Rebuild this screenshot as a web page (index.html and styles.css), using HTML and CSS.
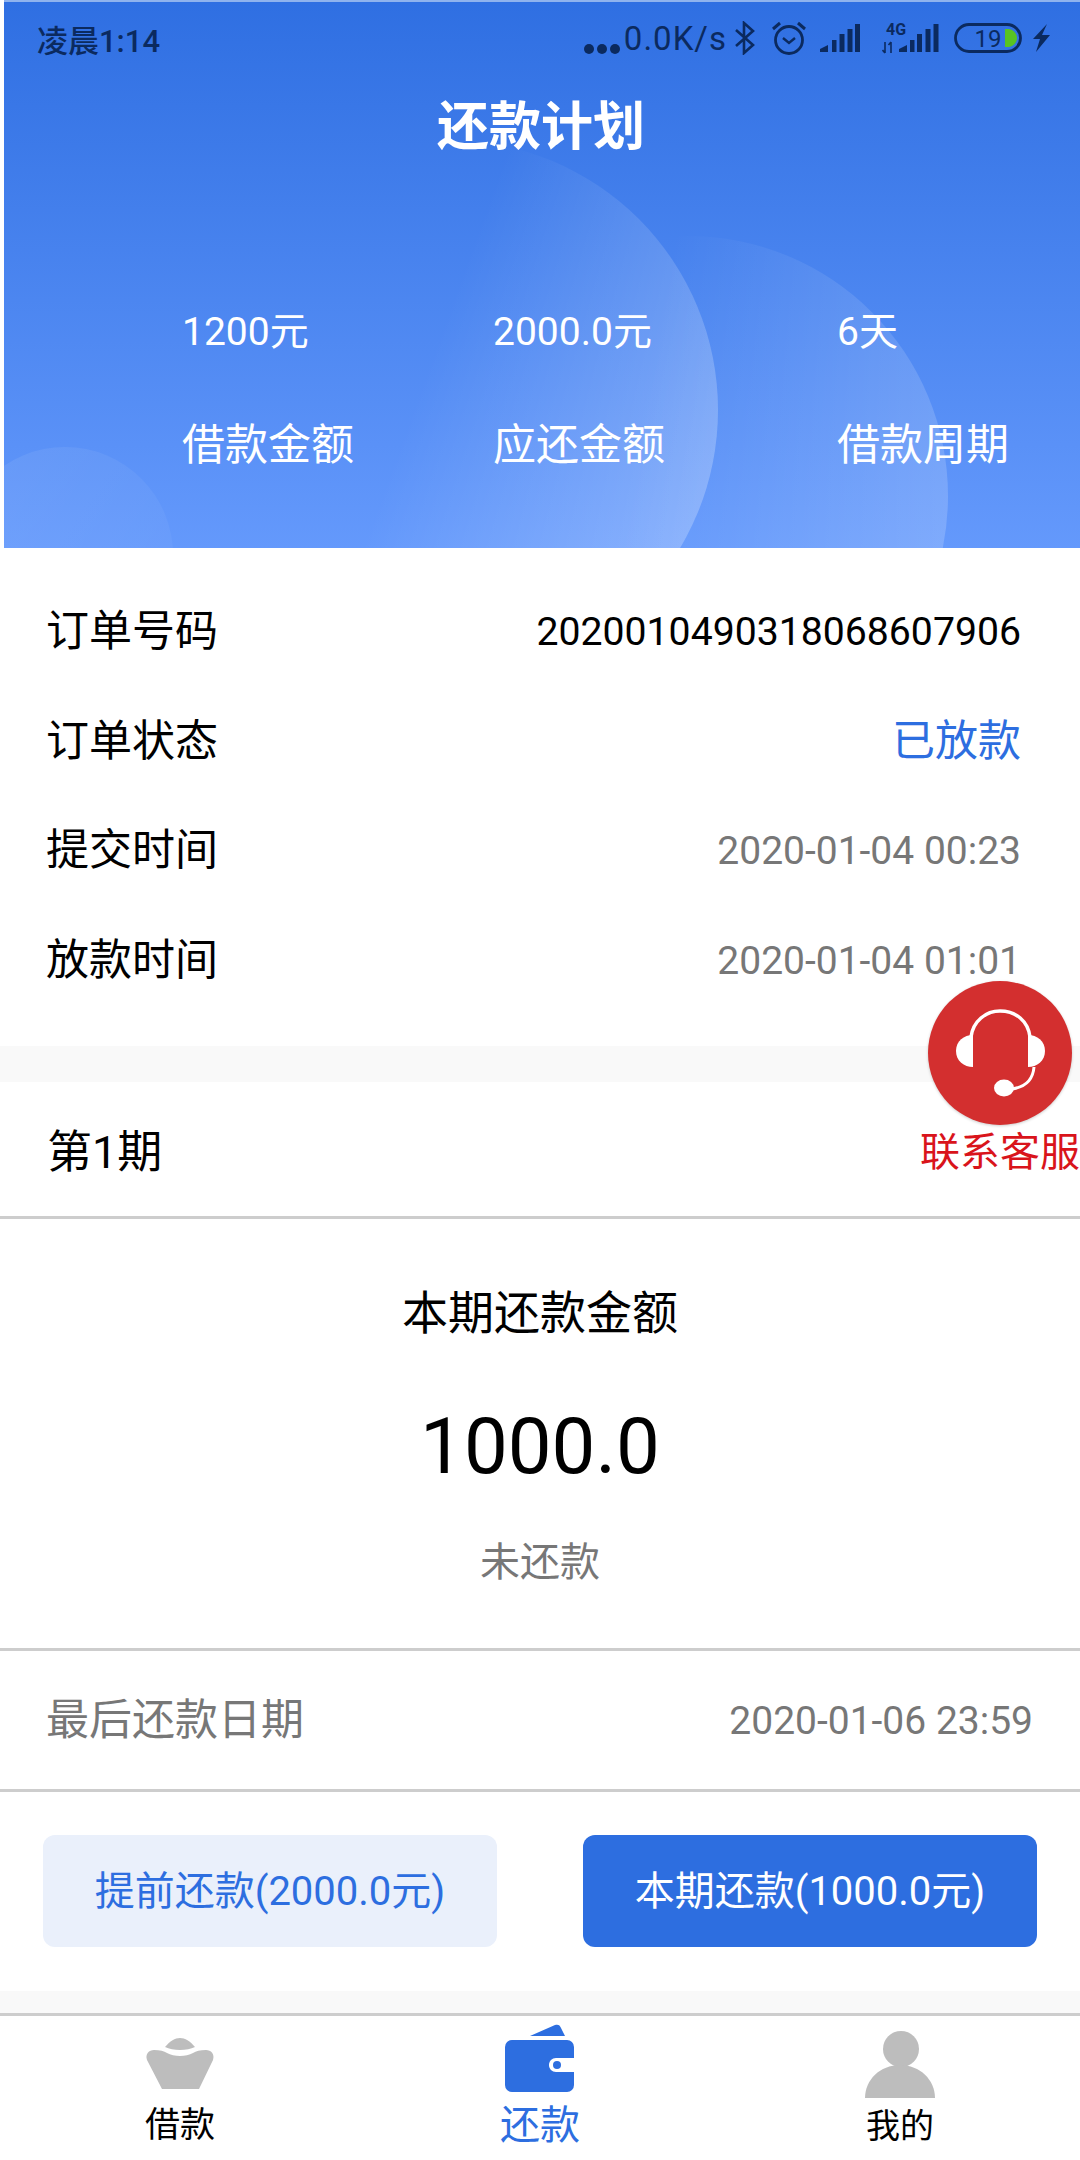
FILE: index.html
```html
<!DOCTYPE html>
<html>
<head>
    <title>还款计划</title>
    <link rel="stylesheet" href="styles.css">
</head>
<body>
    <div class="page">
        <div class="hero">
            <div class="bubble bubble-big"></div>
            <div class="bubble bubble-mid"></div>
            <div class="bubble bubble-small"></div>

            <div class="status-bar">
                <span class="status-time">凌晨1:14</span>
                <div class="status-icons">
                    <span class="status-dots"><i></i><i></i><i></i></span>
                    <span class="status-speed">0.0K/s</span>
                    <svg class="icon-bt" width="20" height="34" viewBox="0 0 20 34"><path d="M1 9 L18 24 L9 32 V2 L18 10 L1 25" fill="none" stroke="#0b2a5f" stroke-width="2.6"/></svg>
                    <svg class="icon-alarm" width="34" height="34" viewBox="0 0 34 34"><circle cx="17" cy="19" r="13.5" fill="none" stroke="#0b2a5f" stroke-width="2.8"/><path d="M11 17 L17 22 L23 17" fill="none" stroke="#0b2a5f" stroke-width="2.4"/><path d="M1 8 L8 2 M33 8 L26 2" stroke="#0b2a5f" stroke-width="3"/></svg>
                    <svg class="icon-signal" width="40" height="30" viewBox="0 0 40 30"><path d="M0 29 V26 L8 22 V29 Z" fill="#0b2a5f"/><rect x="12" y="17" width="4.5" height="12" fill="#0b2a5f"/><rect x="19.5" y="11" width="5" height="18" fill="#0b2a5f"/><rect x="27.5" y="6" width="5" height="23" fill="#0b2a5f"/><rect x="35" y="1" width="5" height="28" fill="#0b2a5f"/></svg>
                    <svg class="icon-signal-4g" width="57" height="34" viewBox="0 0 57 34"><text class="net-label" x="4" y="14">4G</text><path d="M3 21 V32 M0.5 29 L3 32 M9 32 V21 M6.5 24 L9 21" fill="none" stroke="#0b2a5f" stroke-width="1.6"/><path d="M17 31 V28 L25 24 V31 Z" fill="#0b2a5f"/><rect x="28" y="19" width="4.5" height="12" fill="#0b2a5f"/><rect x="35" y="13" width="5" height="18" fill="#0b2a5f"/><rect x="43.5" y="8" width="5" height="23" fill="#0b2a5f"/><rect x="51.5" y="3" width="5" height="28" fill="#0b2a5f"/></svg>
                    <svg class="icon-battery" width="68" height="30" viewBox="0 0 68 30"><rect x="1.5" y="1.5" width="65" height="27" rx="13.5" fill="none" stroke="#0b2a5f" stroke-width="2.8"/><path d="M51 6 H55 C60 7 63 11 63 15 C63 19 60 23 55 24 H51 Z" fill="#58c322"/><text class="battery-label" x="34" y="23.5" text-anchor="middle">19</text></svg>
                    <svg class="icon-bolt" width="17" height="28" viewBox="0 0 17 28"><path d="M14 0 L0 15 H7 L3 28 L17 11 H9 Z" fill="#0b2a5f"/></svg>
                </div>
            </div>

            <div class="hero-title">还款计划</div>

            <div class="stats">
                <div class="stat">
                    <div class="stat-value">1200元</div>
                    <div class="stat-label">借款金额</div>
                </div>
                <div class="stat">
                    <div class="stat-value">2000.0元</div>
                    <div class="stat-label">应还金额</div>
                </div>
                <div class="stat">
                    <div class="stat-value">6天</div>
                    <div class="stat-label">借款周期</div>
                </div>
            </div>
        </div>

        <div class="order">
            <div class="order-row">
                <span class="order-label">订单号码</span>
                <span class="order-number">2020010490318068607906</span>
            </div>
            <div class="order-row">
                <span class="order-label">订单状态</span>
                <span class="order-status">已放款</span>
            </div>
            <div class="order-row">
                <span class="order-label">提交时间</span>
                <span class="order-date">2020-01-04 00:23</span>
            </div>
            <div class="order-row">
                <span class="order-label">放款时间</span>
                <span class="order-date">2020-01-04 01:01</span>
            </div>
        </div>

        <div class="band band-top"></div>

        <div class="period-title">第1期</div>

        <div class="amount">
            <div class="amount-label">本期还款金额</div>
            <div class="amount-value">1000.0</div>
            <div class="amount-state">未还款</div>
        </div>

        <div class="due-row">
            <span class="due-label">最后还款日期</span>
            <span class="due-date">2020-01-06 23:59</span>
        </div>

        <div class="actions">
            <div class="btn btn-light">提前还款(2000.0元)</div>
            <div class="btn btn-primary">本期还款(1000.0元)</div>
        </div>

        <div class="band band-bottom"></div>

        <div class="tabbar">
            <div class="tab">
                <svg class="tab-icon" width="80" height="76" viewBox="0 0 80 76"><path d="M25 25 C30 19 35 16 40 16 C45 16 50 19 55 25 C47 29 33 29 25 25 Z" fill="#bdbdbd"/><path d="M14 28 C20 28 24 29 27 31 C34 35 46 35 53 31 C56 29 60 28 66 28 C71 28 75 32 73 38 L59 67 L22 67 L7 38 C5 32 9 28 14 28 Z" fill="#bdbdbd"/></svg>
                <span class="tab-label">借款</span>
            </div>
            <div class="tab tab-active">
                <svg class="tab-icon" width="80" height="76" viewBox="0 0 80 76"><path d="M30 14 L55 3 C58 2 60 3 61 6 L65 14 Z" fill="#2d6ee0"/><rect x="5" y="18" width="69" height="52" rx="7" fill="#2d6ee0"/><path d="M74 36 H56 C52 36 49 39 49 43 C49 47 52 50 56 50 H74 Z" fill="#fff"/><circle cx="57" cy="43" r="4" fill="#2d6ee0"/></svg>
                <span class="tab-label">还款</span>
            </div>
            <div class="tab tab-me">
                <svg class="tab-icon" width="80" height="76" viewBox="0 0 80 76"><circle cx="41" cy="27" r="18" fill="#bdbdbd"/><path d="M5 76 C5 58 20 43 40 43 C60 43 75 58 75 76 Z" fill="#bdbdbd"/></svg>
                <span class="tab-label">我的</span>
            </div>
        </div>

        <div class="service">
            <div class="service-circle">
                <svg width="144" height="144" viewBox="0 0 144 144"><path d="M43 56 C45 40 58 30 72 30 C88 30 100 40 102 56" fill="none" stroke="#fff" stroke-width="3.5"/><path d="M45 54 V86 C36 86 28 80 28 70 C28 60 36 54 45 54 Z" fill="#fff"/><path d="M100 54 V86 C109 86 117 80 117 70 C117 60 109 54 100 54 Z" fill="#fff"/><path d="M106 86 C105 98 98 106 84 108" fill="none" stroke="#fff" stroke-width="3"/><ellipse cx="76" cy="107" rx="10" ry="8.5" fill="#fff"/></svg>
            </div>
            <div class="service-label">联系客服</div>
        </div>
    </div>
</body>
</html>
```

FILE: styles.css
```css
:root {
    --blue: #2d6ee0;
    --status-color: #0b2a5f;
    --grey-text: #777;
    --line-color: #cdcdcd;
    --band-color: #f9f9f9;
}

body {
    margin: 0;
    padding: 0;
    background: #fff;
    color: #000;
    font-family: Roboto, "Noto Sans CJK SC", sans-serif;
}

.page {
    position: relative;
    width: 1080px;
    height: 2160px;
    overflow: hidden;
}

/* Header */
.hero {
    position: relative;
    height: 546px;
    margin-left: 4px;
    border-top: 2px solid #8fb3ee;
    overflow: hidden;
    color: #fff;
    background: linear-gradient(180deg, #2f6fe2 0%, #6499fc 100%);
}

.bubble {
    position: absolute;
    border-radius: 50%;
}

.bubble-big {
    left: 174px;
    top: 138px;
    width: 540px;
    height: 540px;
    background: linear-gradient(110deg, rgba(255, 255, 255, 0) 45%, rgba(255, 255, 255, 0.3) 100%);
}

.bubble-mid {
    left: 424px;
    top: 234px;
    width: 520px;
    height: 520px;
    background: linear-gradient(100deg, rgba(255, 255, 255, 0) 40%, rgba(255, 255, 255, 0.2) 100%);
}

.bubble-small {
    left: -47px;
    top: 445px;
    width: 216px;
    height: 216px;
    background: linear-gradient(115deg, rgba(255, 255, 255, 0.07) 20%, rgba(255, 255, 255, 0.03) 100%);
}

.status-bar {
    position: relative;
    display: flex;
    align-items: center;
    justify-content: space-between;
    height: 72px;
    padding: 0 30px 4px 33px;
    color: var(--status-color);
}

.status-time {
    font-size: 31px;
    font-weight: 500;
}

.status-icons {
    display: flex;
    align-items: center;
    font-size: 33px;
}

.status-dots {
    display: flex;
    gap: 3px;
    align-self: flex-end;
    margin-bottom: 4px;
}

.status-dots i {
    width: 10px;
    height: 10px;
    border-radius: 50%;
    background: var(--status-color);
}

.status-speed {
    margin-left: 4px;
    letter-spacing: 1px;
}

.icon-bt {
    margin-left: 8px;
}

.icon-alarm {
    margin-left: 17px;
}

.icon-signal {
    margin-left: 14px;
}

.icon-signal-4g {
    margin-left: 22px;
}

.icon-battery {
    margin-left: 15px;
}

.icon-bolt {
    margin-left: 11px;
}

.net-label {
    font-size: 16px;
    font-weight: 700;
    fill: var(--status-color);
}

.battery-label {
    font-size: 24px;
    fill: var(--status-color);
}

.hero-title {
    position: relative;
    height: 100px;
    line-height: 100px;
    margin-right: 2px;
    text-align: center;
    font-size: 52px;
    font-weight: 700;
}

.stats {
    position: relative;
    display: grid;
    grid-template-columns: 311px 344px auto;
    margin-top: 124px;
    padding-left: 178px;
}

.stat-value {
    height: 60px;
    line-height: 60px;
    font-size: 39px;
}

.stat-label {
    height: 60px;
    line-height: 60px;
    margin-top: 53px;
    font-size: 43px;
}

/* Order info */
.order {
    padding: 28px 59px 31px 46px;
}

.order-row {
    display: flex;
    align-items: center;
    justify-content: space-between;
    height: 109.7px;
    font-size: 43px;
}

.order-label,
.order-status {
    margin-bottom: 8px;
}

.order-number {
    margin-top: 2px;
    font-size: 39.2px;
}

.order-status {
    font-size: 43px;
    color: var(--blue);
}

.order-date {
    margin-top: 2px;
    font-size: 39px;
    color: var(--grey-text);
}

.band {
    background: var(--band-color);
}

.band-top {
    height: 36px;
}

.period-title {
    display: flex;
    align-items: center;
    height: 134px;
    padding-left: 47px;
    font-size: 45px;
    border-bottom: 3px solid var(--line-color);
}

/* Amount */
.amount {
    height: 429px;
    padding-top: 64px;
    box-sizing: border-box;
    text-align: center;
}

.amount-label {
    height: 60px;
    line-height: 60px;
    font-size: 46px;
}

.amount-value {
    height: 100px;
    line-height: 100px;
    margin-top: 54px;
    font-size: 78px;
}

.amount-state {
    height: 56px;
    line-height: 56px;
    margin-top: 38px;
    font-size: 40px;
    color: var(--grey-text);
}

.due-row {
    display: flex;
    align-items: center;
    justify-content: space-between;
    height: 138px;
    padding: 0 47px 0 46px;
    font-size: 43px;
    color: var(--grey-text);
    border-top: 3px solid var(--line-color);
    border-bottom: 3px solid var(--line-color);
}

.due-label {
    margin-bottom: 8px;
}

.due-date {
    margin-top: 2px;
    font-size: 39px;
}

/* Buttons */
.actions {
    display: flex;
    gap: 86px;
    padding: 43px 43px 44px;
}

.btn {
    flex: 1;
    height: 112px;
    line-height: 114px;
    border-radius: 12px;
    text-align: center;
    font-size: 40px;
}

.btn-light {
    background: #eaf0fb;
    color: var(--blue);
}

.btn-primary {
    background: var(--blue);
    color: #fff;
}

.band-bottom {
    height: 22px;
    border-bottom: 3px solid var(--line-color);
}

/* Bottom tabs */
.tabbar {
    display: grid;
    grid-template-columns: repeat(3, 1fr);
    padding-top: 6px;
}

.tab {
    display: flex;
    flex-direction: column;
    align-items: center;
}

.tab-icon {
    display: block;
}

.tab-label {
    height: 50px;
    line-height: 50px;
    margin-top: 3px;
    font-size: 35px;
}

.tab-active .tab-label {
    font-size: 40px;
    color: var(--blue);
}

.tab-me .tab-label {
    font-size: 34px;
}

/* Floating customer service button */
.service {
    position: absolute;
    right: 0;
    top: 981px;
    width: 160px;
    text-align: center;
}

.service-circle {
    width: 144px;
    height: 144px;
    margin: 0 auto;
    border-radius: 50%;
    background: #d32f2f;
    box-shadow: 0 1px 3px rgba(0, 0, 0, 0.2);
}

.service-circle svg {
    display: block;
}

.service-label {
    height: 56px;
    line-height: 56px;
    font-size: 40px;
    color: #d9141b;
    white-space: nowrap;
}
```
